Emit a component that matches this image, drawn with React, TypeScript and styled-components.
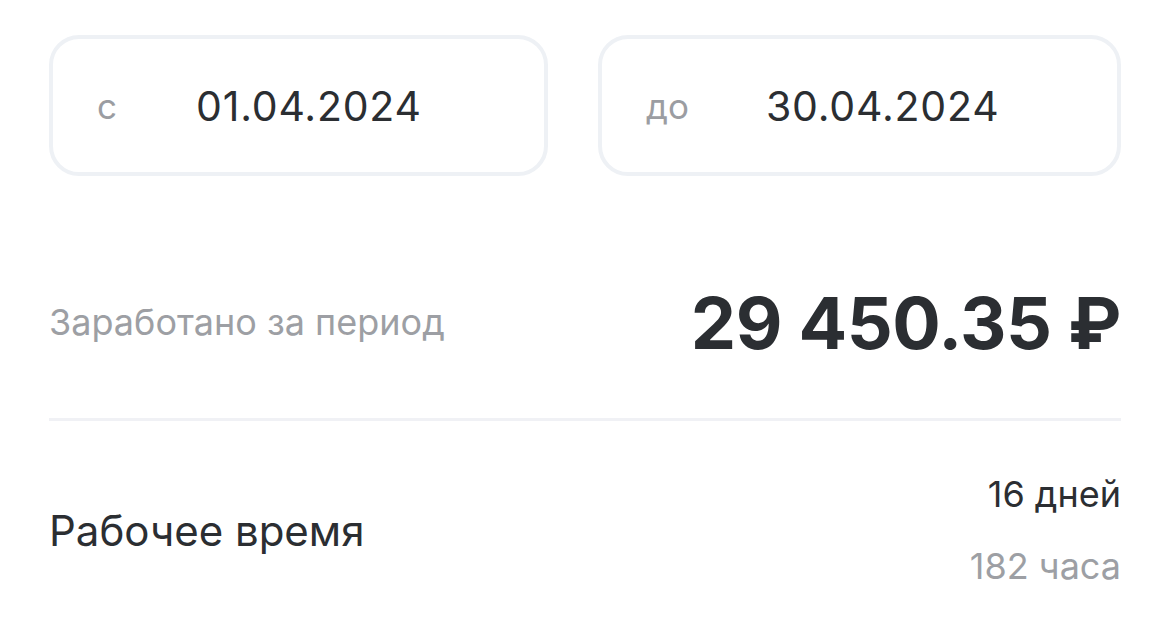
import React from "react";
import styled, { createGlobalStyle } from "styled-components";

const Global = createGlobalStyle`
  html, body {
    margin: 0;
    padding: 0;
    background: #ffffff;
    font-family: Inter, "Noto Sans", sans-serif;
    -webkit-font-smoothing: antialiased;
  }
`;

const Page = styled.div`
  width: 1072px;
  padding: 35px 49px 0 49px;
  display: flex;
  flex-direction: column;
  color: #2b2e32;
`;

const DateRow = styled.div`
  display: grid;
  grid-template-columns: 499px 523px;
  gap: 50px;
`;

const DateCard = styled.div`
  height: 141px;
  box-sizing: border-box;
  border: 4px solid #eef1f5;
  border-radius: 30px;
  display: flex;
  align-items: center;
  padding-left: 44px;
`;

const DateLabel = styled.span<{ $w: number }>`
  font-size: 35px;
  color: #9b9da2;
  width: ${(p) => p.$w}px;
  flex-shrink: 0;
`;

const DateValue = styled.span`
  font-size: 41px;
  font-weight: 400;
  color: #2b2e32;
  letter-spacing: 0.8px;
`;

const EarnRow = styled.div`
  height: 192px;
  padding-top: 50px;
  display: flex;
  align-items: center;
  justify-content: space-between;
`;

const EarnLabel = styled.span`
  font-size: 36px;
  color: #9d9fa4;
`;

const EarnValue = styled.span`
  font-size: 72px;
  font-weight: 700;
  color: #2b2e32;
  letter-spacing: -0.5px;
`;

const Divider = styled.div`
  height: 3px;
  background: #f0f1f5;
`;

const WorkRow = styled.div`
  padding-top: 53px;
  display: flex;
  align-items: center;
  justify-content: space-between;
`;

const WorkLabel = styled.span`
  font-size: 42px;
  color: #2b2e32;
`;

const WorkStats = styled.div`
  display: flex;
  flex-direction: column;
  align-items: flex-end;
  gap: 32px;
`;

const Stat = styled.span<{ $muted?: boolean }>`
  font-size: 36px;
  line-height: 40px;
  color: ${(p) => (p.$muted ? "#9d9fa4" : "#2b2e32")};
`;

export default function App() {
  return (
    <>
      <Global />
      <Page>
        <DateRow>
          <DateCard>
            <DateLabel $w={99}>с</DateLabel>
            <DateValue>01.04.2024</DateValue>
          </DateCard>
          <DateCard>
            <DateLabel $w={120}>до</DateLabel>
            <DateValue>30.04.2024</DateValue>
          </DateCard>
        </DateRow>
        <EarnRow>
          <EarnLabel>Заработано за период</EarnLabel>
          <EarnValue>29 450.35 ₽</EarnValue>
        </EarnRow>
        <Divider />
        <WorkRow>
          <WorkLabel>Рабочее время</WorkLabel>
          <WorkStats>
            <Stat>16 дней</Stat>
            <Stat $muted>182 часа</Stat>
          </WorkStats>
        </WorkRow>
      </Page>
    </>
  );
}
